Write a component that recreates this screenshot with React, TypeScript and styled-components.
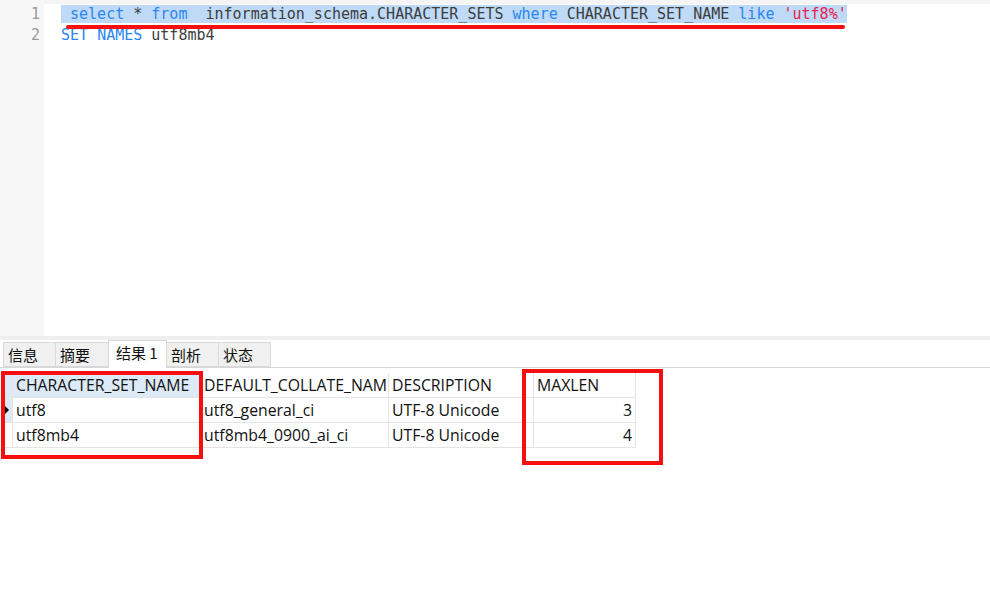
import React from "react";
import styled, { createGlobalStyle } from "styled-components";

const Global = createGlobalStyle`
  html, body { margin: 0; padding: 0; background: #ffffff; }
  body { overflow: hidden; }
`;

const Page = styled.div`
  width: 990px;
  height: 598px;
  display: flex;
  flex-direction: column;
  background: #ffffff;
  position: relative;
  overflow: hidden;
`;

const Editor = styled.div`
  height: 336px;
  display: flex;
  flex-shrink: 0;
`;

const Gutter = styled.div`
  width: 44px;
  background: #f7f7f7;
  padding-top: 4px;
  box-sizing: border-box;
  display: flex;
  flex-direction: column;
  align-items: flex-end;
  padding-right: 4px;
`;

const LineNo = styled.div`
  font-family: "DejaVu Sans Mono", "Liberation Mono", monospace;
  font-size: 15px;
  line-height: 21px;
  height: 21px;
  color: #9a9a9a;
`;

const Code = styled.div`
  flex: 1;
  position: relative;
  border-top: 4px solid #f5f5f5;
  padding-left: 17px;
`;

const CodeLine = styled.div<{ $selected?: boolean }>`
  font-family: "DejaVu Sans Mono", "Liberation Mono", monospace;
  font-size: 15px;
  line-height: 21px;
  height: 21px;
  white-space: pre;
  color: #3d3d3d;
  span.sel {
    background: ${(p) => (p.$selected ? "#bfdaf6" : "transparent")};
  }
`;

const Kw = styled.span`
  color: #2a87f2;
`;

const Str = styled.span`
  color: #e8204d;
`;

const Underline = styled.div`
  position: absolute;
  left: 22px;
  top: 21px;
  width: 779px;
  height: 4px;
  border-radius: 2px;
  background: #f50f0f;
`;

const Divider = styled.div`
  height: 4px;
  background: #efefef;
  flex-shrink: 0;
`;

const TabBar = styled.div`
  height: 27px;
  display: flex;
  align-items: flex-end;
  padding-left: 4px;
  border-bottom: 1px solid #d6d6d6;
  flex-shrink: 0;
`;

const Tab = styled.div<{ $active?: boolean; $w: number }>`
  width: ${(p) => p.$w}px;
  height: ${(p) => (p.$active ? 28 : 25)}px;
  margin-bottom: ${(p) => (p.$active ? -1 : 0)}px;
  box-sizing: border-box;
  background: ${(p) => (p.$active ? "#ffffff" : "#f0f0f0")};
  border: 1px solid #d9d9d9;
  border-bottom: ${(p) => (p.$active ? "none" : "1px solid #d9d9d9")};
  margin-left: -1px;
  font-family: "Noto Sans CJK SC", "Noto Sans", sans-serif;
  font-size: 15px;
  color: #111;
  padding-left: ${(p) => (p.$active ? 7 : 4)}px;
  line-height: 24px;
`;

const GridWrap = styled.div`
  padding-top: 5px;
  padding-left: 1px;
`;

const Grid = styled.div`
  display: grid;
  grid-template-columns: 12px 188px 188px 145px 102px;
  width: max-content;
`;

const Cell = styled.div<{ $hl?: boolean; $right?: boolean }>`
  height: 25px;
  box-sizing: border-box;
  border-right: 1px solid #e4e4e4;
  border-bottom: 1px solid #e4e4e4;
  background: ${(p) => (p.$hl ? "#dce9f7" : "#ffffff")};
  font-family: "Open Sans", "Noto Sans", sans-serif;
  font-size: 15.8px;
  line-height: 25px;
  color: #111;
  padding: 0 3px;
  white-space: nowrap;
  overflow: hidden;
  text-align: ${(p) => (p.$right ? "right" : "left")};
`;

const Indicator = styled.div<{ $hl?: boolean }>`
  height: 25px;
  box-sizing: border-box;
  border-bottom: 1px solid #e4e4e4;
  border-right: 1px solid #e4e4e4;
  background: ${(p) => (p.$hl ? "#dce9f7" : "#ffffff")};
  display: flex;
  align-items: center;
  padding-left: 3px;
`;

const Arrow = styled.div`
  width: 0;
  height: 0;
  border-top: 5px solid transparent;
  border-bottom: 5px solid transparent;
  border-left: 5px solid #000;
`;

const RedBox = styled.div<{ $l: number; $t: number; $w: number; $h: number }>`
  position: absolute;
  left: ${(p) => p.$l}px;
  top: ${(p) => p.$t}px;
  width: ${(p) => p.$w}px;
  height: ${(p) => p.$h}px;
  box-sizing: border-box;
  border: 4px solid #f50f0f;
  pointer-events: none;
`;

const rows = [
  ["utf8", "utf8_general_ci", "UTF-8 Unicode", "3"],
  ["utf8mb4", "utf8mb4_0900_ai_ci", "UTF-8 Unicode", "4"],
];

export default function App() {
  return (
    <Page>
      <Global />
      <Editor>
        <Gutter>
          <LineNo>1</LineNo>
          <LineNo>2</LineNo>
        </Gutter>
        <Code>
          <CodeLine $selected>
            <span className="sel">
              {" "}
              <Kw>select</Kw> * <Kw>from</Kw>  information_schema.CHARACTER_SETS <Kw>where</Kw> CHARACTER_SET_NAME{" "}
              <Kw>like</Kw> <Str>'utf8%'</Str>
            </span>
          </CodeLine>
          <CodeLine>
            <Kw>SET</Kw> <Kw>NAMES</Kw> utf8mb4
          </CodeLine>
          <Underline />
        </Code>
      </Editor>
      <Divider />
      <TabBar>
        <Tab $w={53}>信息</Tab>
        <Tab $w={54}>摘要</Tab>
        <Tab $w={59} $active>
          结果 1
        </Tab>
        <Tab $w={53}>剖析</Tab>
        <Tab $w={53}>状态</Tab>
      </TabBar>
      <GridWrap>
        <Grid>
          <Indicator $hl />
          <Cell $hl>CHARACTER_SET_NAME</Cell>
          <Cell>DEFAULT_COLLATE_NAM</Cell>
          <Cell>DESCRIPTION</Cell>
          <Cell>MAXLEN</Cell>
          {rows.map((r, i) => (
            <React.Fragment key={i}>
              <Indicator $hl={i === 0}>{i === 0 && <Arrow />}</Indicator>
              <Cell>{r[0]}</Cell>
              <Cell>{r[1]}</Cell>
              <Cell>{r[2]}</Cell>
              <Cell $right>{r[3]}</Cell>
            </React.Fragment>
          ))}
        </Grid>
      </GridWrap>
      <RedBox $l={1} $t={371} $w={202} $h={88} />
      <RedBox $l={522} $t={369} $w={141} $h={96} />
    </Page>
  );
}
